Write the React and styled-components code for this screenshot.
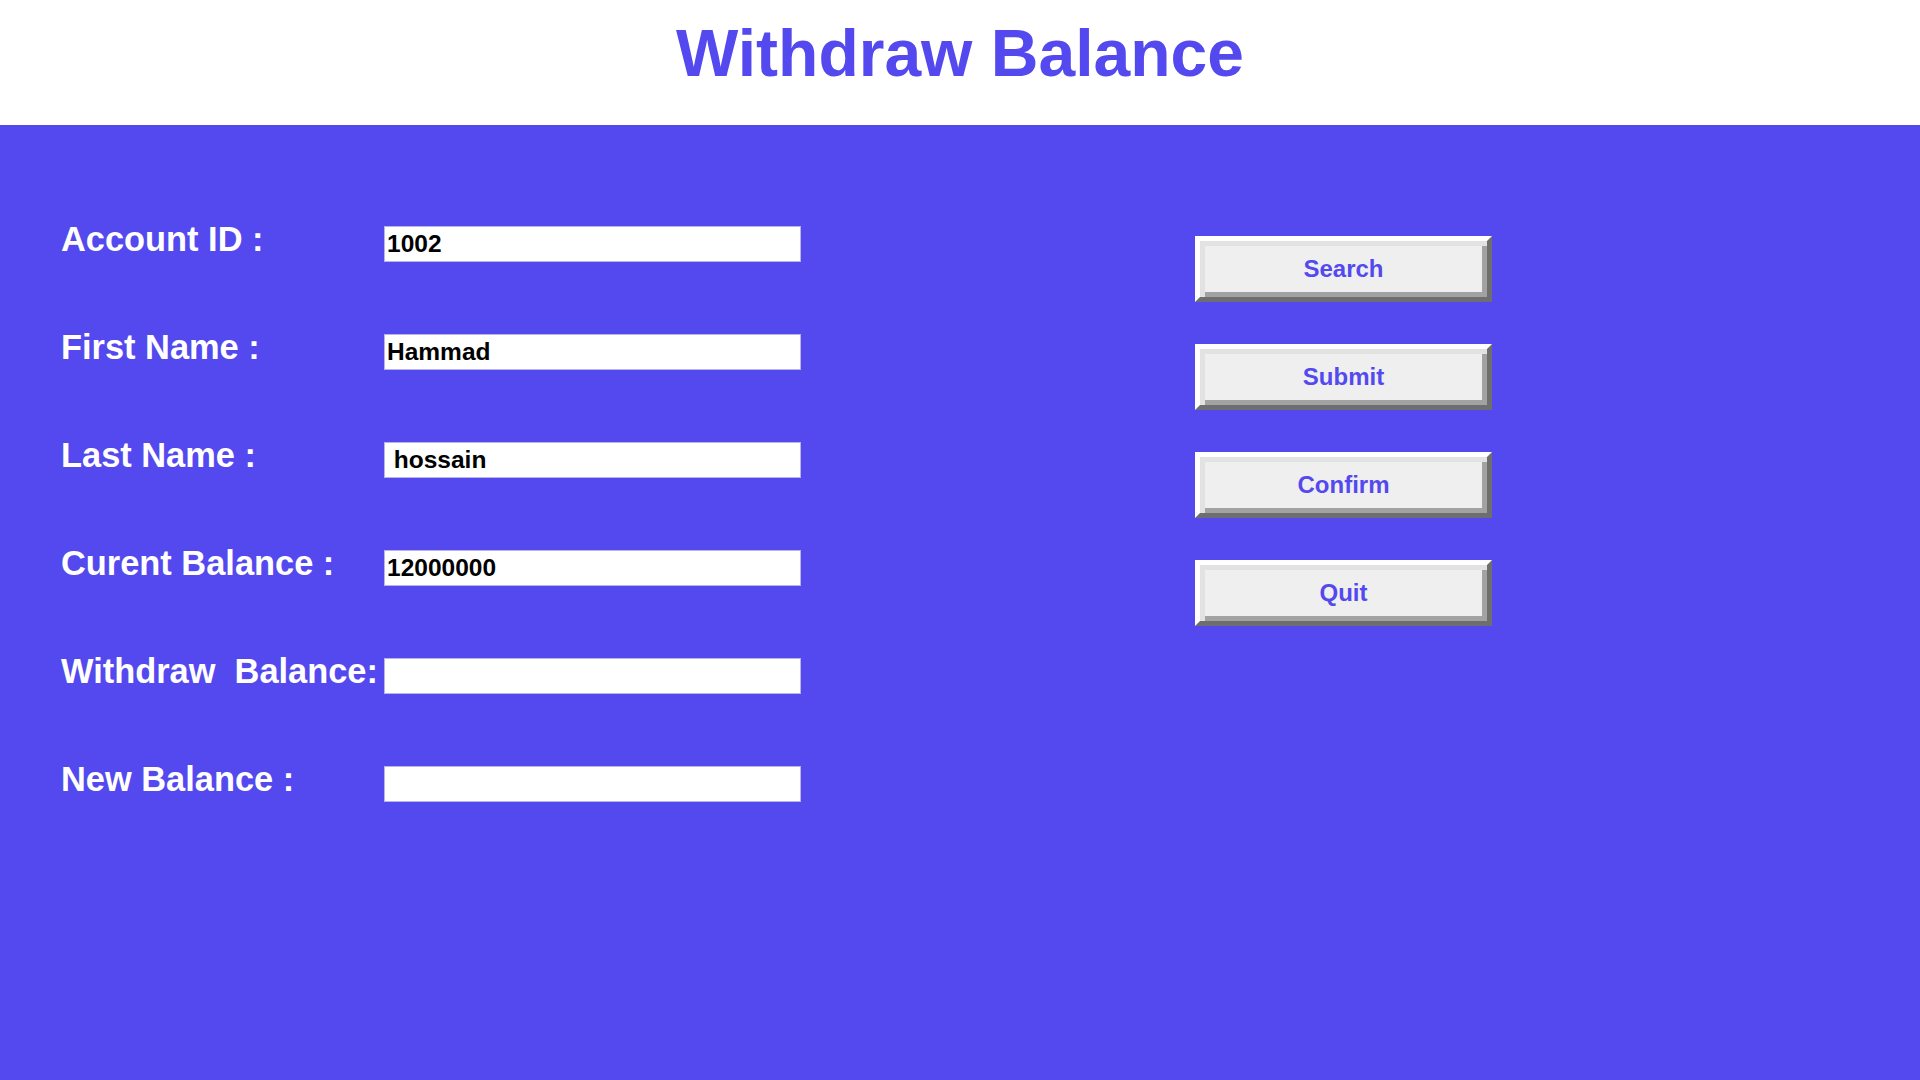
import React from "react";
import styled, { createGlobalStyle } from "styled-components";

const BLUE = "#5449EF";

const Global = createGlobalStyle`
  html, body { margin: 0; padding: 0; }
  body { font-family: "Liberation Sans", Arial, sans-serif; background: ${BLUE}; }
  * { box-sizing: border-box; }
`;

const Page = styled.div`
  min-height: 100vh;
  display: flex;
  flex-direction: column;
`;

const Header = styled.header`
  height: 125px;
  background: #ffffff;
  padding-top: 20px;
  text-align: center;
`;

const Title = styled.h1`
  margin: 0;
  font-size: 66px;
  line-height: 66px;
  font-weight: 700;
  color: ${BLUE};
`;

const Main = styled.main`
  flex: 1;
  background: ${BLUE};
  display: flex;
  align-items: flex-start;
  padding: 101px 0 0 61px;
`;

const Form = styled.div`
  display: grid;
  grid-template-columns: 323px 417px;
  row-gap: 72px;
`;

const Label = styled.label`
  color: #ffffff;
  font-size: 34.4px;
  font-weight: 700;
  line-height: 26px;
  white-space: pre;
`;

const Field = styled.input`
  width: 417px;
  height: 36px;
  margin: 0;
  border: 1px solid #b9b6e6;
  background: #ffffff;
  padding: 0 0 0 2px;
  font-family: "Liberation Sans", Arial, sans-serif;
  font-size: 24.5px;
  font-weight: 700;
  color: #000000;
  white-space: pre;
  outline: none;
`;

const Buttons = styled.div`
  margin-left: 394px;
  padding-top: 10px;
  display: flex;
  flex-direction: column;
  gap: 42px;
`;

const Button = styled.button`
  width: 297px;
  height: 66px;
  padding: 0;
  border: 5px solid;
  border-color: #ffffff #6e6e6e #6e6e6e #ffffff;
  box-shadow: inset 5px 5px 0 #e2e2e2, inset -5px -5px 0 #a2a2a2;
  background: #efefef;
  font-family: "Liberation Sans", Arial, sans-serif;
  font-size: 24px;
  font-weight: 700;
  color: ${BLUE};
  cursor: pointer;
`;

const fields = [
  { label: "Account ID :", value: "1002" },
  { label: "First Name :", value: "Hammad" },
  { label: "Last Name :", value: " hossain" },
  { label: "Curent Balance :", value: "12000000" },
  { label: "Withdraw  Balance:", value: "" },
  { label: "New Balance :", value: "" },
];

const actions = ["Search", "Submit", "Confirm", "Quit"];

export default function App() {
  return (
    <Page>
      <Global />
      <Header>
        <Title>Withdraw Balance</Title>
      </Header>
      <Main>
        <Form>
          {fields.map((f) => (
            <React.Fragment key={f.label}>
              <Label>{f.label}</Label>
              <Field defaultValue={f.value} />
            </React.Fragment>
          ))}
        </Form>
        <Buttons>
          {actions.map((a) => (
            <Button key={a}>{a}</Button>
          ))}
        </Buttons>
      </Main>
    </Page>
  );
}
